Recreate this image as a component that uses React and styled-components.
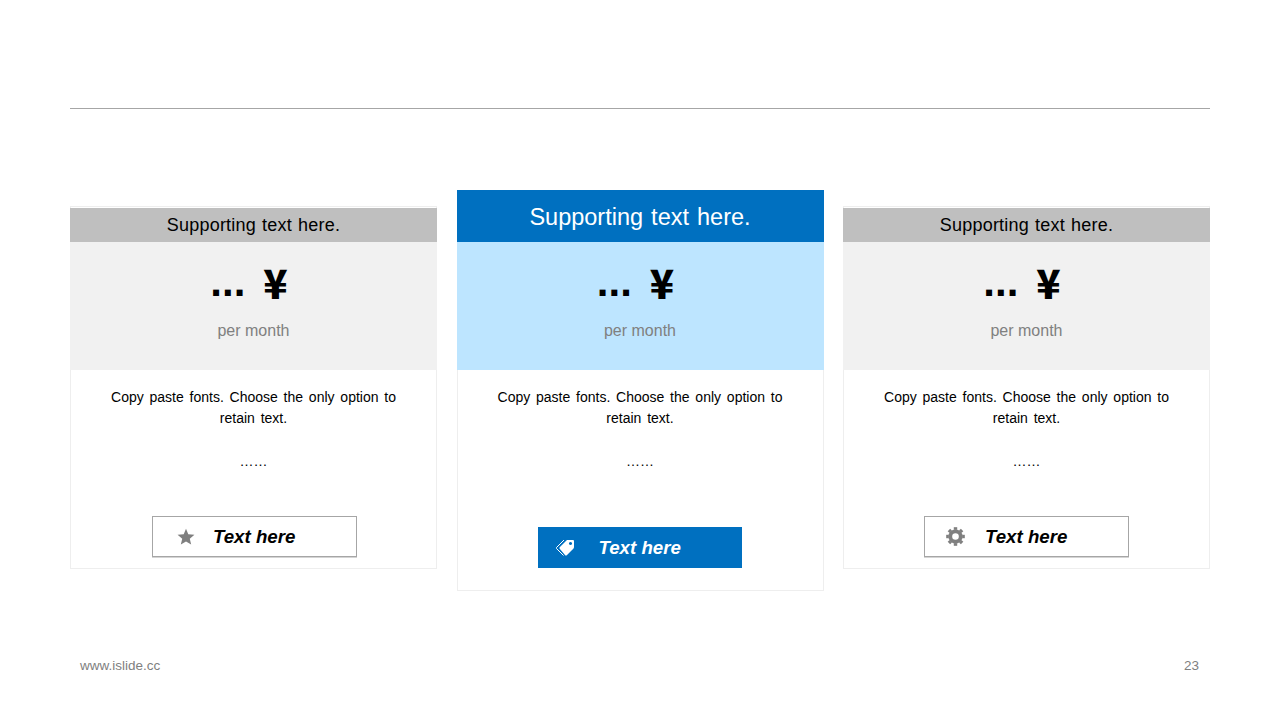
import React from 'react';
import styled, { createGlobalStyle } from 'styled-components';

const GlobalStyle = createGlobalStyle`
  html, body {
    margin: 0;
    padding: 0;
    background: #fff;
  }
  body {
    font-family: "Liberation Sans", Arial, sans-serif;
  }
`;

const Page = styled.div`
  box-sizing: border-box;
  width: 1280px;
  height: 720px;
  padding: 108px 70px 0;
  display: flex;
  flex-direction: column;
  overflow: hidden;
`;

const Rule = styled.div`
  height: 1px;
  background: #a6a6a6;
`;

const Plans = styled.div`
  display: flex;
  justify-content: space-between;
  align-items: flex-start;
  margin-top: 81px;
  height: 401px;
`;

const Card = styled.div`
  box-sizing: border-box;
  width: 367px;
  height: ${(p) => (p.$featured ? '401px' : '363px')};
  margin-top: ${(p) => (p.$featured ? '0' : '16px')};
  padding-top: ${(p) => (p.$featured ? '0' : '1px')};
  border: 1px solid #eeeeee;
  border-top-width: ${(p) => (p.$featured ? '0' : '1px')};
  display: flex;
  flex-direction: column;
  align-items: center;
`;

const Header = styled.div`
  align-self: stretch;
  height: ${(p) => (p.$featured ? '52px' : '34px')};
  margin: 0 -1px;
  background: ${(p) => (p.$featured ? '#0070c0' : '#bfbfbf')};
  color: ${(p) => (p.$featured ? '#fff' : '#000')};
  font-size: ${(p) => (p.$featured ? '23.5px' : '18px')};
  line-height: ${(p) => (p.$featured ? '54px' : '35px')};
  letter-spacing: ${(p) => (p.$featured ? '0' : '0.2px')};
  word-spacing: ${(p) => (p.$featured ? '1.5px' : '1px')};
  text-align: center;
  white-space: nowrap;
`;

const Band = styled.div`
  align-self: stretch;
  height: 128px;
  margin: 0 -1px;
  background: ${(p) => (p.$featured ? '#bde5ff' : '#f1f1f1')};
  display: flex;
  flex-direction: column;
  align-items: center;
`;

const Price = styled.div`
  margin-top: 14px;
  padding-right: 9px;
  height: 52px;
  display: flex;
  align-items: center;
  gap: 18px;
  color: #000;
  font-weight: 700;
`;

const Dots = styled.span`
  font-size: 42px;
  line-height: 52px;
`;

const Yen = styled.span`
  font-family: "Noto Sans CJK SC", "Liberation Sans", sans-serif;
  font-size: 40px;
  line-height: 52px;
  font-weight: 900;
`;

const Period = styled.div`
  margin-top: 13px;
  font-size: 16px;
  line-height: 20px;
  color: #808080;
`;

const Description = styled.p`
  margin: 17px 0 0;
  width: 300px;
  font-size: 14px;
  line-height: 21px;
  word-spacing: 1.9px;
  text-align: center;
  color: #000;
`;

const Ellipsis = styled.div`
  margin-top: 22px;
  font-size: 14px;
  line-height: 21px;
  color: #000;
`;

const Action = styled.div`
  box-sizing: border-box;
  flex: none;
  align-self: flex-start;
  width: ${(p) => (p.$featured ? '204px' : '205px')};
  height: 41px;
  margin-top: auto;
  margin-left: ${(p) => p.$left}px;
  margin-bottom: ${(p) => (p.$featured ? '22px' : '11px')};
  padding-left: ${(p) => p.$pad}px;
  display: flex;
  align-items: center;
  background: ${(p) => (p.$featured ? '#0070c0' : '#fff')};
  border: ${(p) => (p.$featured ? 'none' : '1px solid #a6a6a6')};
  box-shadow: ${(p) => (p.$featured ? 'none' : '0 1px 0 #d4d4d4')};
  color: ${(p) => (p.$featured ? '#fff' : '#000')};
  font-size: 18.7px;
  font-weight: 700;
  font-style: italic;
`;

const IconSlot = styled.span`
  flex: none;
  width: ${(p) => p.$width}px;
  display: flex;
  align-items: center;
`;

const Footer = styled.div`
  display: flex;
  justify-content: space-between;
  margin-top: 67px;
  padding: 0 11px 0 10px;
  font-size: 13.5px;
  line-height: 16px;
  color: #808080;
`;

const StarIcon = () => (
  <svg width="18" height="17" viewBox="0 0 24 23" fill="#7f7f7f">
    <polygon points="12,1 15.1,8.4 23.4,9.1 17.1,14.4 19,22.4 12,18.2 5,22.4 6.9,14.4 0.6,9.1 8.9,8.4" />
  </svg>
);

const TagsIcon = () => (
  <svg width="20" height="18" viewBox="0 0 20 18" fill="none">
    <path
      fill="#fff"
      fillRule="evenodd"
      d="M12 1H18Q19 1 19 2V8Q19 9 18.3 9.7L12 16Q11 17 10 16L4.7 9.7Q4 9 4.7 8.3ZM15.5 2.9a1.6 1.6 0 1 0 0.01 0Z"
    />
    <path stroke="#fff" strokeWidth="1" d="M9 1L1.5 8.5Q1 9 1.5 9.5L8.5 16.5" />
  </svg>
);

const GearIcon = () => (
  <svg width="19" height="19" viewBox="0 0 20 20" fill="none" stroke="#7f7f7f">
    <circle cx="10" cy="10" r="5.5" strokeWidth="4" />
    {[0, 45, 90, 135, 180, 225, 270, 315].map((angle) => (
      <line key={angle} x1="10" y1="3" x2="10" y2="0.2" strokeWidth="3.6" transform={`rotate(${angle} 10 10)`} />
    ))}
  </svg>
);

const plans = [
  { id: 'basic', Icon: StarIcon, left: 81, pad: 24, slot: 36 },
  { id: 'plus', Icon: TagsIcon, left: 80, pad: 17, slot: 44, featured: true },
  { id: 'pro', Icon: GearIcon, left: 80, pad: 21, slot: 39 },
];

export default function App() {
  return (
    <Page>
      <GlobalStyle />
      <Rule />
      <Plans>
        {plans.map(({ id, Icon, left, pad, slot, featured }) => (
          <Card key={id} $featured={featured}>
            <Header $featured={featured}>Supporting text here.</Header>
            <Band $featured={featured}>
              <Price>
                <Dots>...</Dots>
                <Yen>¥</Yen>
              </Price>
              <Period>per month</Period>
            </Band>
            <Description>Copy paste fonts. Choose the only option to retain text.</Description>
            <Ellipsis>……</Ellipsis>
            <Action $featured={featured} $left={left} $pad={pad}>
              <IconSlot $width={slot}>
                <Icon />
              </IconSlot>
              Text here
            </Action>
          </Card>
        ))}
      </Plans>
      <Footer>
        <span>www.islide.cc</span>
        <span>23</span>
      </Footer>
    </Page>
  );
}
